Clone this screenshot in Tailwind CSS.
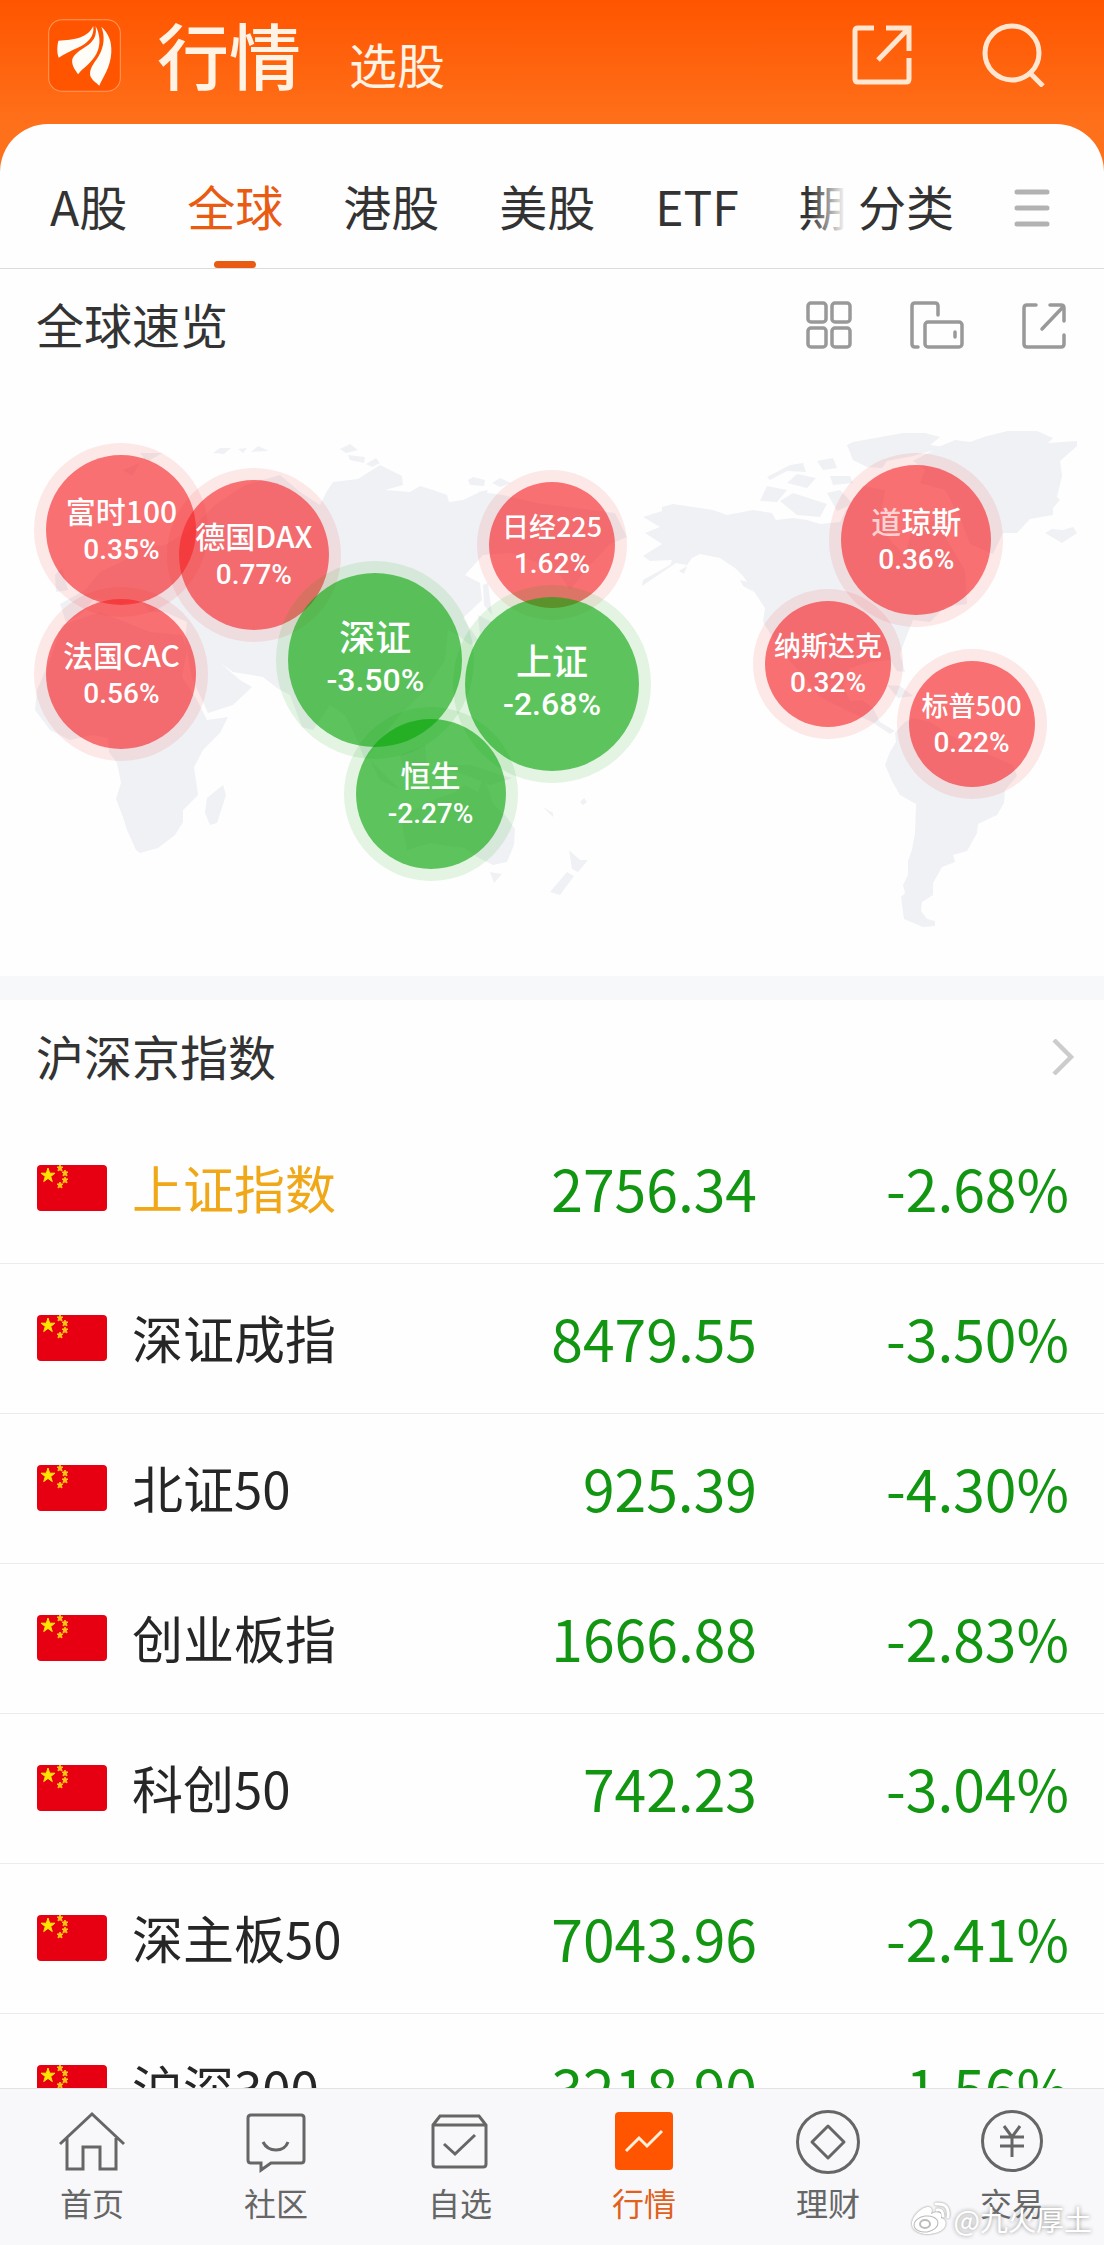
<!DOCTYPE html>
<html lang="zh-CN">
<head>
  <meta charset="UTF-8" />
  <meta name="viewport" content="width=device-width, initial-scale=1.0" />
  <title>行情 - 全球</title>
  <script src="https://cdn.jsdelivr.net/npm/@tailwindcss/browser@4"></script>
</head>
<body class="h-screen overflow-hidden flex flex-col bg-[linear-gradient(#ff5500,#ff701a_124px)] font-['Noto_Sans_CJK_SC',sans-serif] text-[#333333]">

  <!-- 顶部栏 -->
  <header class="h-[124px] shrink-0 flex items-center pl-12 pr-[58px] pb-3.5 text-[#fff3e6]">
    <svg class="size-[73px] shrink-0" viewBox="11 17 218 218" aria-hidden="true">
      <rect x="13" y="19" width="214" height="214" rx="40" fill="#ff5500" stroke="#ff9a5c" stroke-width="3" />
      <g fill="#fffdf8">
        <path d="M42 82C90 80 132 72 146 38C151 68 130 90 100 103C80 112 60 122 43 133C37 118 38 98 42 82Z" />
        <path d="M153 38C157 60 152 78 132 94C108 110 84 124 83 142C83 158 92 170 101 182C116 162 140 150 156 120C170 92 166 62 153 38Z" />
        <path d="M170 40C181 66 180 98 162 128C148 150 134 164 137 186C142 200 154 207 164 216C176 190 198 160 200 118C202 84 192 60 170 40Z" />
      </g>
    </svg>
    <nav class="flex flex-1 items-baseline gap-12 pb-1 pl-9">
      <a href="#" class="text-[72px] leading-[100px] font-medium">行情</a>
      <a href="#" class="text-[48px] leading-[60px]">选股</a>
    </nav>
    <button type="button" aria-label="分享">
      <svg class="w-15 h-16" viewBox="0 0 60 64" fill="none" stroke="#ffe6d0" stroke-width="5">
        <path d="M22 5H6Q3 5 3 8V56Q3 59 6 59H54Q57 59 57 56V35M34 5H57V28M56 6 26 37" />
      </svg>
    </button>
    <button type="button" aria-label="搜索" class="ml-[70px]">
      <svg class="size-16" viewBox="0 0 64 64" fill="none" stroke="#ffe6d0" stroke-width="5">
        <circle cx="30" cy="30" r="27" />
        <path d="M48 50 61 63" />
      </svg>
    </button>
  </header>

  <main class="flex-1 min-h-0 overflow-hidden bg-[#fefefe] rounded-t-[48px]">

    <!-- 分类标签 -->
    <div class="flex h-[145px] border-b border-[#dcdcdc] text-[48px]">
      <nav class="flex flex-1 min-w-0 relative gap-15 overflow-hidden whitespace-nowrap pl-[50px]">
        <a href="#" class="leading-[162px]">A股</a>
        <a href="#" class="relative leading-[162px] text-[#e95a13]">全球<span class="absolute bottom-0 left-1/2 h-[7px] w-[42px] -translate-x-1/2 rounded-full bg-[#e95a13]"></span></a>
        <a href="#" class="leading-[162px]">港股</a>
        <a href="#" class="leading-[162px]">美股</a>
        <a href="#" class="leading-[162px]">ETF</a>
        <a href="#" class="leading-[162px]">期货</a>
        <span class="absolute inset-y-0 right-0 w-9 bg-linear-to-r from-[#fefefe]/0 to-[#fefefe]"></span>
      </nav>
      <div class="flex shrink-0 gap-[60px] pl-3 pr-[54px]">
        <a href="#" class="leading-[162px]">分类</a>
        <button type="button" aria-label="更多" class="pt-6">
          <svg class="w-9 h-10" viewBox="0 0 36 40" stroke="#b2b2b2" stroke-width="5" stroke-linecap="round">
            <path d="M3 4H33M3 20H33M3 36H33" />
          </svg>
        </button>
      </div>
    </div>

    <!-- 全球速览 -->
    <section>
      <div class="flex h-[114px] items-center pl-9 pr-[38px]">
        <h2 class="flex-1 pb-1.5 text-[48px]">全球速览</h2>
        <div class="flex items-center gap-[58px] pb-0.5 text-[#999999]">
          <button type="button" aria-label="宫格">
            <svg class="w-[46px] h-12" viewBox="0 0 46 48" fill="none" stroke="currentColor" stroke-width="3.5">
              <rect x="2" y="2" width="18" height="19" rx="3" /><rect x="26" y="2" width="18" height="19" rx="3" />
              <rect x="2" y="27" width="18" height="19" rx="3" /><rect x="26" y="27" width="18" height="19" rx="3" />
            </svg>
          </button>
          <button type="button" aria-label="横屏">
            <svg class="w-[54px] h-12" viewBox="0 0 54 48" fill="none" stroke="currentColor" stroke-width="3.5" stroke-linecap="round">
              <path d="M8 46H5Q2 46 2 43V5Q2 2 5 2H25Q28 2 28 5V14" />
              <rect x="15" y="21" width="37" height="25" rx="3" />
              <path d="M45 31V36" />
            </svg>
          </button>
          <button type="button" aria-label="分享速览">
            <svg class="w-[44px] h-12" viewBox="0 0 44 48" fill="none" stroke="currentColor" stroke-width="3.5" stroke-linecap="round">
              <path d="M14 4H5Q2 4 2 7V43Q2 46 5 46H39Q42 46 42 43V34M28 4H39Q42 4 42 7V20M41 6 20 28" />
            </svg>
          </button>
        </div>
      </div>

      <div class="relative h-[593px]">
        <svg class="absolute inset-0 size-full" viewBox="0 383 1104 593" preserveAspectRatio="none" fill="#eff1f4" aria-hidden="true">
          <!-- 非洲 -->
          <path d="M62 625 100 612 125 622 150 632 182 635 187 650 182 677 197 700 207 720 228 717 220 733 203 750 194 767 198 795 183 810 183 822 175 835 158 848 140 853 136 850 127 830 123 817 116 799 121 783 117 763 109 752 108 738 92 735 70 740 50 730 35 710 37 690 50 660Z" />
          <path d="M223 785 226 795 217 823 210 825 205 813 207 798Z" />
          <!-- 欧亚大陆 -->
          <path d="M66 622 60 604 85 590 100 572 125 560 140 548 165 545 190 530 215 505 245 485 280 475 300 492 320 505 327 491 333 482 358 479 380 465 402 476 403 485 385 490 410 492 420 486 433 490 447 495 449 502 463 500 480 492 503 495 537 503 615 513 627 537 610 544 590 565 570 590 560 575 545 565 510 553 483 555 465 575 480 583 482 600 463 618 478 640 470 645 458 635 448 630 445 660 425 690 400 715 380 740 365 760 355 735 345 715 330 705 313 730 302 727 290 695 277 688 263 677 233 672 220 663 240 680 252 687 233 705 208 713 192 678 185 640 187 622 165 612 150 612 140 600 120 604 95 598 80 615Z" />
          <path d="M55 575 62 568 68 590 56 592ZM140 453 162 453 147 462ZM123 470 140 463 132 476ZM213 453 220 448 231 448 224 454ZM238 449 247 448 243 453ZM251 452 258 446 269 451ZM340 449 350 444 358 450 346 453ZM348 455 365 457 364 463 350 460ZM366 464 376 458 380 463 372 467ZM468 480 473 477 485 480 484 486 470 485ZM492 483 500 478 511 483 500 487ZM478 492 488 490 486 495Z" />
          <path d="M483 585 488 583 492 615 484 605ZM478 615 492 622 480 635ZM370 760 385 775 400 790 380 780ZM400 755 425 745 428 770 405 775ZM440 765 470 765 512 778 490 785Z" />
          <!-- 大洋洲 -->
          <path d="M402 825 405 815 420 807 440 797 453 793 465 785 478 792 482 779 487 785 493 804 505 815 515 829 514 845 507 862 493 865 477 857 465 848 447 846 430 843 407 850Z" />
          <path d="M490 872 502 874 494 883ZM569 850 580 860 588 860 578 872 572 869ZM567 872 574 876 560 895 550 892ZM543 807 553 813 553 817ZM580 802 584 798 587 802 583 805Z" />
          <!-- 北美洲 -->
          <path d="M643 517 662 511 662 507 673 504 713 510 727 515 753 510 772 513 776 520 793 518 807 520 820 524 840 522 847 508 863 486 885 490 880 520 890 540 905 555 912 530 935 520 950 545 965 570 967 604 945 607 930 622 913 620 905 640 900 654 905 672 897 671 890 660 870 662 850 668 843 685 850 701 862 700 873 708 880 722 895 731 890 734 872 722 850 712 820 697 800 672 783 654 763 622 765 608 753 590 743 576 735 568 720 558 700 554 692 558 687 565 676 563 642 586 643 580 670 565 672 560 650 561 643 556 662 544 645 533 660 527Z" />
          <path d="M740 580 748 582 754 592 743 586ZM679 571 687 566 684 574ZM767 477 790 465 803 463 806 472 787 471 770 480ZM787 483 797 474 816 478 807 488ZM760 501 767 486 787 490 777 502ZM780 501 793 493 827 504 820 517 797 515ZM817 461 833 458 837 468 823 470ZM830 476 850 476 853 483 833 485ZM827 493 840 490 853 504 837 511ZM887 685 900 686 913 696 898 698Z" />
          <path d="M847 445 853 442 903 433 925 433 940 437 930 445 945 447 913 456 887 461 882 468 867 467 853 460Z" />
          <!-- 格陵兰与冰岛 -->
          <path d="M913 461 930 452 943 445 955 440 970 442 987 436 1008 431 1037 431 1053 438 1048 443 1077 441 1077 446 1060 461 1062 476 1057 497 1060 500 1053 508 1053 515 1030 519 1017 533 1003 533 993 554 970 544 960 518 945 490 920 483 925 470Z" />
          <path d="M1045 533 1052 529 1063 530 1073 527 1077 533 1062 543Z" />
          <!-- 南美洲 -->
          <path d="M895 733 905 722 913 718 930 722 950 735 967 745 985 753 1013 765 1017 776 1005 790 1004 803 997 815 978 824 977 833 967 851 953 855 955 862 942 867 933 883 933 895 922 902 921 911 927 919 935 921 935 926 923 927 904 919 901 897 905 893 903 885 908 875 908 861 912 850 915 833 916 804 900 795 893 783 885 765 890 752 896 742Z" />
        </svg>

        <div id="bubbles" class="text-center font-medium text-white"></div>
      </div>
    </section>

    <div class="h-6 bg-[#f7f8fa]"></div>

    <!-- 沪深京指数 -->
    <section>
      <a href="#" class="flex h-[113px] items-center justify-between pl-9 pr-[29px]">
        <h2 class="pb-1 text-[48px]">沪深京指数</h2>
        <svg class="w-6 h-9" viewBox="0 0 24 36" fill="none" stroke="#cccccc" stroke-width="4.5" aria-hidden="true">
          <path d="M3 1 20 18 3 35" />
        </svg>
      </a>
      <table class="w-full">
        <tbody id="rows"></tbody>
      </table>
    </section>
  </main>

  <!-- 底部导航 -->
  <nav class="relative h-[157px] shrink-0 grid grid-cols-6 border-t border-[#e2e2e4] bg-[#f8f8fa] pt-[19px] text-center text-[32px] leading-10 text-[#666666]">
    <a href="#" class="flex flex-col items-center gap-1.5">
      <svg class="size-[68px]" viewBox="0 0 68 68" fill="none" stroke="currentColor" stroke-width="3">
        <path d="M2 36 34 6 66 36M9 30V61H25V39H42V61H58V30" />
      </svg>
      首页
    </a>
    <a href="#" class="flex flex-col items-center gap-1.5">
      <svg class="size-[68px]" viewBox="0 0 68 68" fill="none" stroke="currentColor" stroke-width="3">
        <path d="M9 7H59Q62 7 62 10V52Q62 55 59 55H29L19 62V55H9Q6 55 6 52V10Q6 7 9 7ZM21 34Q25 42 34 42T46 34" />
      </svg>
      社区
    </a>
    <a href="#" class="flex flex-col items-center gap-1.5">
      <svg class="size-[68px]" viewBox="0 0 68 68" fill="none" stroke="currentColor" stroke-width="3">
        <path d="M7 17 14 8H53L60 17V56Q60 59 57 59H10Q7 59 7 56ZM7 17H60M18 36 29 46 49 27" />
      </svg>
      自选
    </a>
    <a href="#" class="flex flex-col items-center gap-1.5 text-[#e0601c]">
      <svg class="size-[68px]" viewBox="0 0 68 68" fill="none">
        <rect x="5" y="4" width="58" height="58" rx="4" fill="#ff5500" />
        <path d="M16 43 29 30 37 38 52 23" stroke="#fff0dc" stroke-width="3" />
      </svg>
      行情
    </a>
    <a href="#" class="flex flex-col items-center gap-1.5">
      <svg class="size-[68px]" viewBox="0 0 68 68" fill="none" stroke="currentColor" stroke-width="3" stroke-linejoin="round">
        <circle cx="34" cy="34" r="30.5" />
        <path d="M34 18 50 34 34 50 18 34Z" />
      </svg>
      理财
    </a>
    <a href="#" class="flex flex-col items-center gap-1.5">
      <svg class="size-[68px]" viewBox="0 0 68 68" fill="none" stroke="currentColor" stroke-width="3">
        <circle cx="34" cy="33" r="29.5" />
        <path d="M26 18 34 29 42 18M34 29V49M22 29H46M22 38H46" />
      </svg>
      交易
    </a>

    <!-- 水印 -->
    <div class="absolute bottom-1.5 right-3 flex items-center gap-1 text-[28px] text-white [text-shadow:0_0_4px_#888888]">
      <svg class="w-10 h-9 drop-shadow-[0_0_1px_#888888]" viewBox="0 0 40 36" fill="none" aria-hidden="true">
        <path d="M2 24C1 16 12 5 19 6C23 7 22 11 21 13C27 10 33 11 31 17C36 18 37 23 34 27C28 35 4 36 2 24Z" fill="#ffffff" />
        <ellipse cx="16" cy="23" rx="12" ry="8" stroke="#bbbbbb" transform="rotate(-8 16 23)" />
        <ellipse cx="15" cy="23" rx="5" ry="4" stroke="#bbbbbb" stroke-width="2" />
        <path d="M27 9Q33 8 33 15M26 3Q40 2 38 16" stroke="#ffffff" stroke-width="3" stroke-linecap="round" />
      </svg>
      <span>@九火厚土</span>
    </div>
  </nav>

  <!-- 国旗 -->
  <svg class="hidden">
    <symbol id="flag" viewBox="0 0 70 48">
      <rect y="1" width="70" height="46" rx="4" fill="#e60012" />
      <path d="M11 4 12.7 9.2H18L13.7 12.4 15.3 17.6 11 14.4 6.7 17.6 8.3 12.4 4 9.2H9.3Z" fill="#ffe600" stroke="#ffe600" />
      <g fill="#fbc516" stroke="#fbc516">
        <path d="M23 1 24 3H26L24.5 4.5 25 7 23 5.800 21 7 21.5 4.5 20 3H22Z" />
        <path d="M28 6 29 8H31L29.5 9.5 30 12 28 10.800 26 12 26.5 9.5 25 8H27Z" />
        <path d="M28 13 29 15H31L29.5 16.5 30 19 28 17.800 26 19 26.5 16.5 25 15H27Z" />
        <path d="M23 18 24 20H26L24.5 21.5 25 24 23 22.800 21 24 21.5 21.5 20 20H22Z" />
      </g>
    </symbol>
  </svg>

  <script>
    // 气泡尺寸: 大 / 中 / 小
    const sizes = {
      lg: { box: 'size-[174px] pb-1.5', name: 'text-[36px] leading-[44px]', pct: 'text-[32px] leading-[42px]' },
      md: { box: 'size-[150px]', name: 'text-[30px] leading-[38px]', pct: 'text-[28px] leading-[38px]' },
      sm: { box: 'size-[126px]', name: 'text-[27px] leading-[36px]', pct: 'text-[28px] leading-[36px]' },
    };
    const up = 'bg-[#f42326]/65 ring-[#f42326]/10';
    const down = 'bg-[#06a506]/65 ring-[#06a506]/11';

    // 名称, 涨跌幅, 尺寸, x(%), y(px)
    const bubbles = [
      ['富时100', '0.35%', 'md', 11, 147],
      ['德国DAX', '0.77%', 'md', 23, 172],
      ['法国CAC', '0.56%', 'md', 11, 291],
      ['日经225', '1.62%', 'sm', 50, 162],
      ['深证', '-3.50%', 'lg', 34, 277],
      ['上证', '-2.68%', 'lg', 50, 301],
      ['恒生', '-2.27%', 'md', 39, 411],
      ['<span class="text-white/70">道</span>琼斯', '0.36%', 'md', 83, 157],
      ['纳斯达克', '0.32%', 'sm', 75, 281],
      ['标普500', '0.22%', 'sm', 88, 341],
    ];
    document.getElementById('bubbles').innerHTML = bubbles.map(([name, pct, size, x, y]) => `
      <div class="absolute flex flex-col items-center justify-center gap-0.5 whitespace-nowrap rounded-full ring-[12px] -translate-x-1/2 -translate-y-1/2 ${sizes[size].box} ${pct[0] === '-' ? down : up}" style="left:${x}%;top:${y}px">
        <div class="${sizes[size].name}">${name}</div>
        <div class="font-[Roboto,sans-serif] ${sizes[size].pct}">${pct}</div>
      </div>`).join('');

    const rows = [
      ['上证指数', '2756.34', '-2.68%'],
      ['深证成指', '8479.55', '-3.50%'],
      ['北证50', '925.39', '-4.30%'],
      ['创业板指', '1666.88', '-2.83%'],
      ['科创50', '742.23', '-3.04%'],
      ['深主板50', '7043.96', '-2.41%'],
      ['沪深300', '3218.90', '-1.56%'],
    ];
    document.getElementById('rows').innerHTML = rows.map(([name, price, pct], i) => `
      <tr class="h-[150px] border-b border-[#ebebeb] text-[57px] leading-[80px] text-[#129612]">
        <th scope="row" class="pl-[37px] text-left font-normal text-[51px] ${i === 0 ? 'text-[#f0a818]' : 'text-[#262626]'}">
          <div class="flex items-center gap-[25px]"><svg class="w-[70px] h-12 shrink-0"><use href="#flag" /></svg><span class="pb-0.5">${name}</span></div>
        </th>
        <td class="pb-0.5 text-right">${price}</td>
        <td class="w-[347px] pb-0.5 pr-[35px] text-right">${pct}</td>
      </tr>`).join('');
  </script>
</body>
</html>
